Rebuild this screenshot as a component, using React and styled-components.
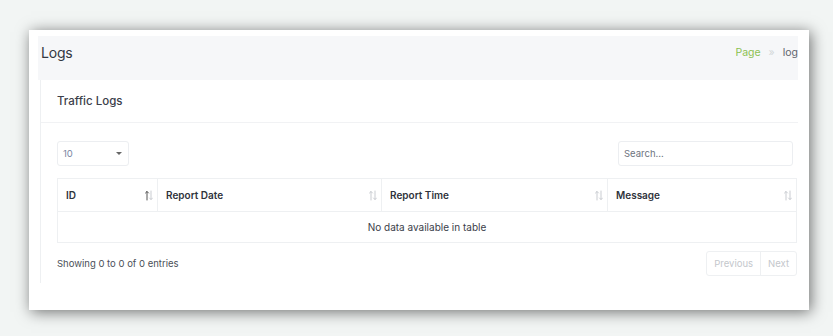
import styled, { createGlobalStyle } from "styled-components";

const Global = createGlobalStyle`
  body {
    margin: 0;
    background: #f2f5f4;
    font-family: Inter, "Noto Sans", sans-serif;
  }
`;

const Page = styled.div`
  padding: 30px 0 0 29px;
  height: 336px;
  box-sizing: border-box;
`;

const Frame = styled.div`
  width: 780px;
  height: 280px;
  background: #fff;
  box-shadow: 2px 2px 14px rgba(0, 0, 0, 0.55);
  padding: 6px 11px 0 9px;
  box-sizing: border-box;
`;

const Header = styled.div`
  height: 44px;
  background: #f6f7f9;
  display: flex;
  align-items: center;
  justify-content: space-between;
  padding: 0 0 11px 3px;
  box-sizing: border-box;

  h1 {
    margin: 0;
    font-size: 14px;
    font-weight: 400;
    color: #333842;
    letter-spacing: -0.2px;
  }
`;

const Crumbs = styled.div`
  display: flex;
  align-items: center;
  gap: 8px;
  font-size: 10.5px;
  white-space: nowrap;
`;

const Crumb = styled.span`
  color: ${(p) => p.$color};
`;

const Card = styled.div`
  margin-left: 2px;
  height: 203px;
  border-left: 1px solid #eef0f2;
  display: flex;
  flex-direction: column;
`;

const CardHeader = styled.div`
  height: 42px;
  display: flex;
  align-items: center;
  padding-left: 16px;
  border-bottom: 1px solid #f1f2f4;
  font-size: 11.5px;
  font-weight: 500;
  color: #3b404a;
`;

const CardBody = styled.div`
  padding: 18px 0 0 16px;
`;

const Controls = styled.div`
  display: flex;
  justify-content: space-between;
  align-items: center;
  padding-right: 5px;
`;

const Select = styled.div`
  width: 72px;
  height: 25px;
  box-sizing: border-box;
  border: 1px solid #eceef1;
  border-radius: 3px;
  display: flex;
  align-items: center;
  justify-content: space-between;
  padding: 0 6px 0 5px;
  font-size: 9.5px;
  color: #7a86a3;

  &::after {
    content: "";
    border-left: 3px solid transparent;
    border-right: 3px solid transparent;
    border-top: 3px solid #666;
  }
`;

const Search = styled.div`
  width: 175px;
  height: 25px;
  box-sizing: border-box;
  border: 1px solid #eceef1;
  border-radius: 3px;
  display: flex;
  align-items: center;
  padding-left: 5px;
  font-size: 9.5px;
  color: #6e7480;
`;

const Table = styled.table`
  margin-top: 12px;
  width: 739px;
  border-collapse: collapse;
  table-layout: fixed;
  font-size: 10px;

  th,
  td {
    border: 1px solid #eef0f2;
  }

  th {
    height: 32px;
    padding: 0 0 0 8px;
    text-align: left;
    font-weight: 600;
    color: #2f333b;
  }

  td {
    height: 28px;
    text-align: center;
    color: #3b404a;
  }
`;

const HeadInner = styled.div`
  display: flex;
  align-items: center;
  justify-content: space-between;
  padding-right: 4px;
`;

const SortIcon = ({ active }) => (
  <svg width="8" height="11" viewBox="0 0 8 11">
    <g fill="none" strokeWidth="1" strokeLinecap="round">
      <path d="M2 10V1.5M0.5 3L2 1.5L3.5 3" stroke={active ? "#555" : "#c9ccd1"} />
      <path d="M6 1v8.5M4.5 8L6 9.5L7.5 8" stroke="#c9ccd1" />
    </g>
  </svg>
);

const Footer = styled.div`
  display: flex;
  justify-content: space-between;
  align-items: center;
  margin-top: 8px;
  font-size: 9.5px;
  color: #4a4f58;
`;

const Pager = styled.div`
  display: flex;
  border: 1px solid #eef0f2;
  border-radius: 3px;
  height: 25px;
  box-sizing: border-box;
  margin-right: 1px;
`;

const PageButton = styled.span`
  display: flex;
  align-items: center;
  padding: 0 ${(p) => p.$pad}px;
  font-size: 9.5px;
  color: #c4c7cc;
  & + & {
    border-left: 1px solid #eef0f2;
  }
`;

const columns = [
  { label: "ID", width: 100, active: true },
  { label: "Report Date", width: 224 },
  { label: "Report Time", width: 226 },
  { label: "Message", width: 189 },
];

export default function App() {
  return (
    <Page>
      <Global />
      <Frame>
        <Header>
          <h1>Logs</h1>
          <Crumbs>
            <Crumb $color="#8cc152">Page</Crumb>
            <Crumb $color="#d4d7da">»</Crumb>
            <Crumb $color="#5f656e">log</Crumb>
          </Crumbs>
        </Header>
        <Card>
          <CardHeader>Traffic Logs</CardHeader>
          <CardBody>
            <Controls>
              <Select>10</Select>
              <Search>Search...</Search>
            </Controls>
            <Table>
              <colgroup>
                {columns.map((c) => (
                  <col key={c.label} style={{ width: c.width }} />
                ))}
              </colgroup>
              <thead>
                <tr>
                  {columns.map((c) => (
                    <th key={c.label}>
                      <HeadInner>
                        {c.label}
                        <SortIcon active={c.active} />
                      </HeadInner>
                    </th>
                  ))}
                </tr>
              </thead>
              <tbody>
                <tr>
                  <td colSpan={4}>No data available in table</td>
                </tr>
              </tbody>
            </Table>
            <Footer>
              <span>Showing 0 to 0 of 0 entries</span>
              <Pager>
                <PageButton $pad={7}>Previous</PageButton>
                <PageButton $pad={7}>Next</PageButton>
              </Pager>
            </Footer>
          </CardBody>
        </Card>
      </Frame>
    </Page>
  );
}
